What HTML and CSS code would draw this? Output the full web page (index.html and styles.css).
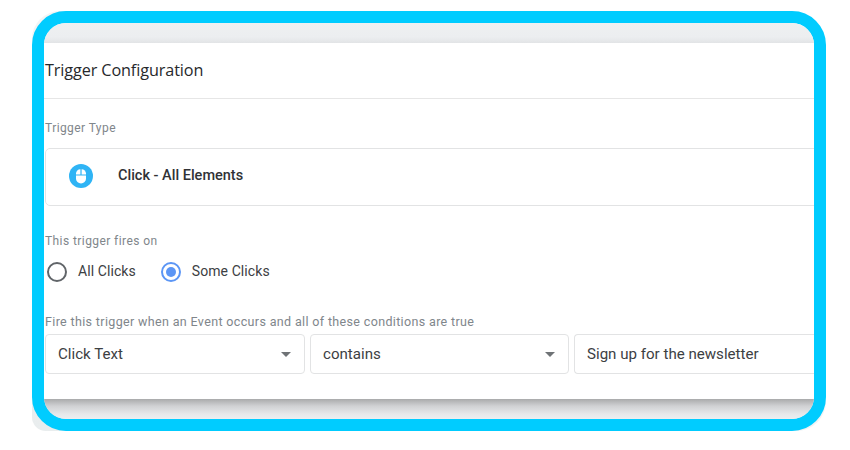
FILE: index.html
```html
<!DOCTYPE html>
<html lang="en">
<head>
<meta charset="utf-8">
<title>Trigger Configuration</title>
<link rel="stylesheet" href="styles.css">
</head>
<body>
<div class="shot">
<div class="frame">
  <div class="band band-top"></div>
  <main class="panel">
    <h1 class="title">Trigger Configuration</h1>
    <section class="content">
      <div class="label label-type">Trigger Type</div>
      <div class="type-card">
        <svg class="mouse" width="24" height="24" viewBox="0 0 24 24">
          <circle cx="12" cy="12" r="12" fill="#2fb4f5"/>
          <path d="M11.4 5.2V10.4H7V9.6A4.4 4.4 0 0 1 11.4 5.2Z" fill="#fff"/>
          <path d="M12.6 5.2V10.4H17V9.6A4.4 4.4 0 0 0 12.6 5.2Z" fill="#fff"/>
          <path d="M7 11.6H17V14.4A5 5 0 0 1 7 14.4Z" fill="#fff"/>
        </svg>
        <span class="type-name">Click - All Elements</span>
      </div>
      <div class="label label-fires">This trigger fires on</div>
      <div class="radios">
        <span class="radio"></span>
        <span class="radio-text">All Clicks</span>
        <span class="radio radio-on"></span>
        <span class="radio-text">Some Clicks</span>
      </div>
      <div class="label label-fire">Fire this trigger when an Event occurs and all of these conditions are true</div>
      <div class="fields">
        <div class="field field-select"><span>Click Text</span><i class="caret"></i></div>
        <div class="field field-select"><span>contains</span><i class="caret"></i></div>
        <div class="field field-input"><span>Sign up for the newsletter</span></div>
      </div>
    </section>
  </main>
  <div class="band band-bottom"></div>
</div>
</div>
</body>
</html>
```
FILE: styles.css
```css
* { box-sizing: border-box; }
html, body { margin: 0; height: 100%; background: #fff; }
body { padding: 11px 24px 19px 32px; font-family: Roboto, "Liberation Sans", sans-serif; overflow: hidden; }
.shot {
  width: 794px; height: 420px;
  border-radius: 28px 34px 30px 14px;
  background:
    linear-gradient(#f3f4f4, #e9edee) left / 50% 100% no-repeat,
    linear-gradient(#fff 50%, #f1f2f3) right / 50% 100% no-repeat;
}
.frame {
  width: 794px; height: 420px;
  border: 12px solid #00ccff;
  border-radius: 34px;
  overflow: hidden;
  display: flex; flex-direction: column;
}
.band { height: 20px; flex: none; }
.band-top { background: linear-gradient(#eef0f1 0, #eceef0 70%, #e2e4e6 100%); }
.band-bottom { background: linear-gradient(#a9aaab 0, #d0d1d3 35%, #e6e8ea 75%, #eceef0 100%); }
.panel { flex: 1; background: #fff; display: flex; flex-direction: column; min-height: 0; }
.title {
  margin: 0; height: 56px; padding: 0 0 0 1px;
  font: 400 16.2px/54px "Open Sans", Roboto, sans-serif;
  letter-spacing: -.1px;
  color: #26282b;
  border-bottom: 1px solid #e6e6e6;
}
.content { padding: 0 0 0 1px; display: flex; flex-direction: column; }
.label { font-size: 12px; line-height: 14px; color: #80868b; letter-spacing: .42px; }
.label-type { margin-top: 22px; }
.type-card {
  margin: 13px 0 0; height: 58px;
  width: 790px;
  border: 1px solid #e2e3e4; border-radius: 5px;
  display: flex; align-items: center;
  padding-left: 23px;
}
.mouse { flex: none; margin-top: -2px; }
.type-name { margin-left: 25px; margin-top: -4px; font-size: 14.5px; font-weight: 500; color: #303236; }
.label-fires { margin-top: 28px; }
.radios { display: flex; align-items: center; margin: 13px 0 0 2px; height: 22px; }
.radio { width: 20px; height: 20px; border-radius: 50%; border: 2px solid #616569; flex: none; }
.radio-on { border-color: #5c96f5; position: relative; }
.radio-on::after { content: ""; position: absolute; inset: 3px; border-radius: 50%; background: #5c96f5; }
.radio-text { font-size: 14px; color: #3c4043; margin: 0 25px 0 11px; letter-spacing: .08px; position: relative; top: -1px; }
.label-fire { margin-top: 32px; font-size: 12.5px; letter-spacing: .35px; }
.fields { display: flex; gap: 5px; margin-top: 5px; }
.field {
  height: 40px; flex: none;
  border: 1px solid #e2e3e4; border-radius: 4px;
  display: flex; align-items: center; justify-content: space-between;
  padding: 0 13px 0 12px;
  font-size: 15.1px; color: #3c4043;
}
.field-select { width: 260px; }
.field + .field-select { width: 259px; }
.field-input { width: 300px; border-right: 0; border-radius: 4px 0 0 4px; }
.caret { width: 0; height: 0; border: 5px solid transparent; border-top: 5px solid #6f7376; border-bottom: 0; }
```
